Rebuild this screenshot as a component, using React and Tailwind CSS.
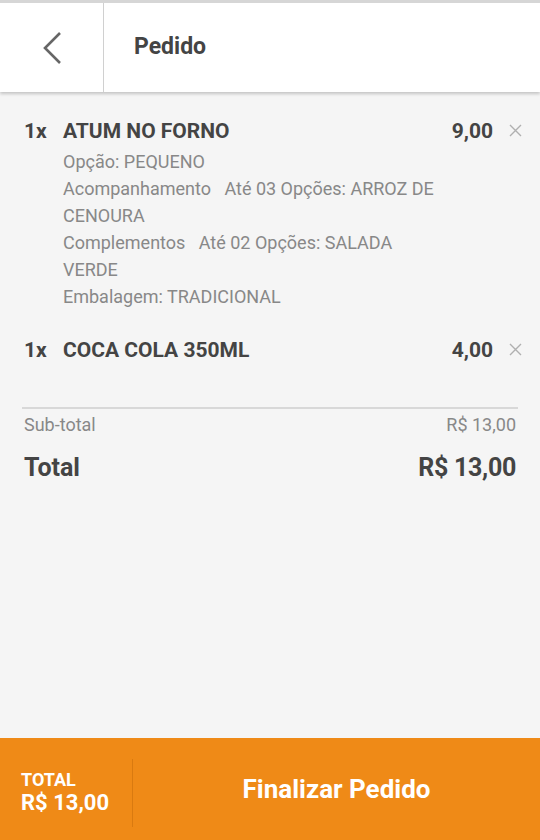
import React from 'react';

const items = [
  {
    qty: '1x',
    name: 'ATUM NO FORNO',
    price: '9,00',
    details: [
      'Opção: PEQUENO',
      'Acompanhamento\u00a0\u00a0 Até 03 Opções: ARROZ DE CENOURA',
      'Complementos\u00a0\u00a0 Até 02 Opções: SALADA VERDE',
      'Embalagem: TRADICIONAL',
    ],
  },
  { qty: '1x', name: 'COCA COLA 350ML', price: '4,00', details: [] },
];

const App = () => {
  return (
    <div
      className="w-[540px] h-[840px] flex flex-col bg-[#f5f5f5] overflow-hidden"
      style={{ fontFamily: 'Roboto, "Liberation Sans", sans-serif' }}
    >
      {/* Header */}
      <div className="border-t-[3px] border-[#d6d6d6] bg-white h-[92px] flex shadow-[0_2px_3px_rgba(0,0,0,0.2)] relative z-10">
        <button className="w-[104px] border-r border-[#d0d0d0] flex items-center justify-center text-[#666]">
          <svg width="22" height="34" viewBox="0 0 22 34" fill="none" className="ml-[1px]">
            <path d="M19 2 L4 17 L19 32" stroke="currentColor" strokeWidth="2.6" />
          </svg>
        </button>
        <div className="flex items-center pl-[30px] text-[23px] font-bold text-[#444]">Pedido</div>
      </div>

      {/* Items */}
      <div className="flex-1 px-[22px] pt-[25px]">
        {items.map((it, i) => (
          <div key={i} className="flex pl-[2px] mr-[-4px] mb-[26px]">
            <div className="w-[39px] shrink-0 text-[21px] font-bold text-[#444] leading-[28px]">{it.qty}</div>
            <div className="flex-1 min-w-0 pr-[10px]">
              <div className="text-[21px] font-bold text-[#444] leading-[28px]">{it.name}</div>
              {it.details.length > 0 && (
                <div className="mt-[3px] text-[18px] text-[#888] leading-[27px] max-w-[385px]">
                  {it.details.map((d, j) => (
                    <div key={j}>{d}</div>
                  ))}
                </div>
              )}
            </div>
            <div className="shrink-0 text-[21px] font-bold text-[#444] leading-[28px]">{it.price}</div>
            <div className="w-[29px] shrink-0 flex justify-end pt-[7px] text-[#b0b0b0]">
              <svg width="13" height="13" viewBox="0 0 13 13">
                <path d="M1 1 L12 12 M12 1 L1 12" stroke="currentColor" strokeWidth="1.4" />
              </svg>
            </div>
          </div>
        ))}

        <div className="mt-[43px] border-t-2 border-[#d8d8d8] pt-[4px]">
          <div className="flex justify-between px-[2px] text-[18px] text-[#888] leading-[24px]">
            <span>Sub-total</span>
            <span>R$ 13,00</span>
          </div>
          <div className="flex justify-between px-[2px] mt-[16px] text-[25px] font-bold text-[#444] leading-[30px]">
            <span>Total</span>
            <span className="tracking-[-0.3px]">R$ 13,00</span>
          </div>
        </div>
      </div>

      {/* Footer */}
      <div className="h-[102px] bg-[#ef8a17] flex items-center text-white">
        <div className="w-[133px] h-[68px] border-r border-[#d97a10] flex flex-col justify-center pl-[21px] mt-[8px]">
          <div className="text-[18px] font-bold leading-[20px]">TOTAL</div>
          <div className="text-[22px] font-bold leading-[26px]">R$ 13,00</div>
        </div>
        <div className="flex-1 text-center text-[26px] font-bold">Finalizar Pedido</div>
      </div>
    </div>
  );
};

export default App;
